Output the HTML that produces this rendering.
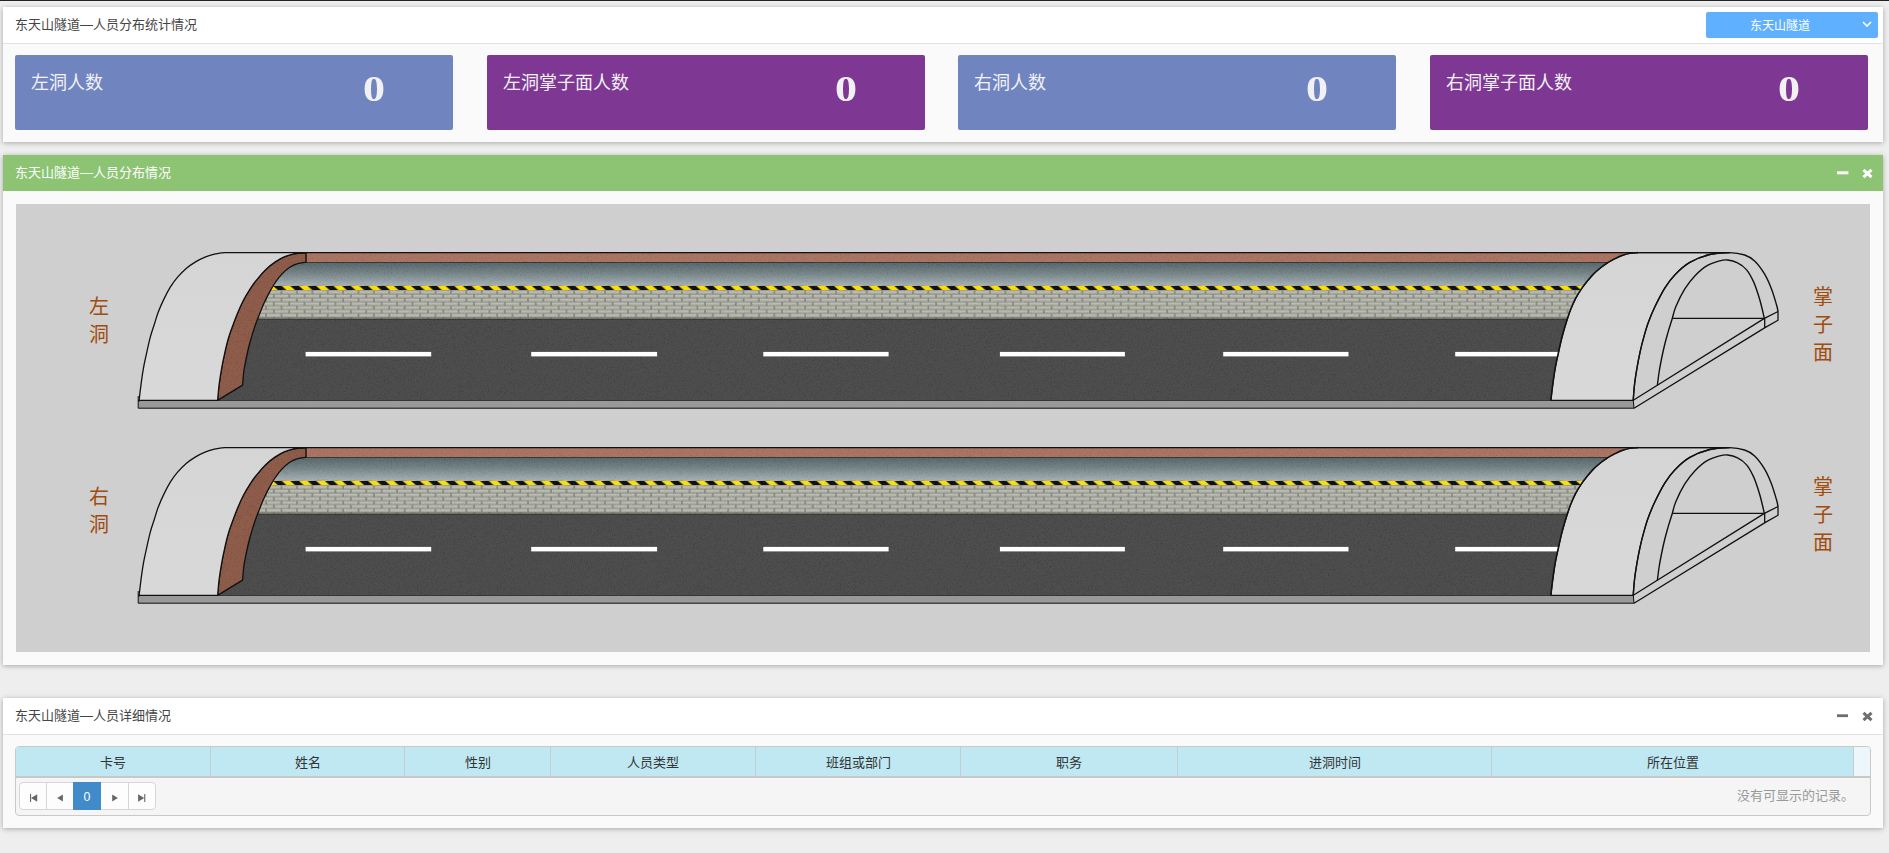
<!DOCTYPE html>
<html lang="zh-CN">
<head>
<meta charset="utf-8">
<title>东天山隧道—人员分布</title>
<style>
*{box-sizing:border-box}
html,body{margin:0;padding:0}
body{width:1889px;height:853px;overflow:hidden;background:#eeeeee;font-family:"Liberation Sans",sans-serif;font-size:13px;color:#333;position:relative}
.topline{position:absolute;left:0;top:0;width:1889px;height:1px;background:#222}
.panel{position:absolute;left:3px;width:1880px;background:#fafafa;box-shadow:0 1px 5px rgba(0,0,0,.3)}
.phead{position:absolute;left:0;top:0;width:100%;height:37px;background:#fff;border-bottom:1px solid #e2e2e2}
.phead .title{position:absolute;left:12px;top:0;line-height:36px;font-size:13px;color:#454545;white-space:nowrap}
.phead.green{background:#8cc474;border-bottom:none;height:36px}
.phead.green .title{color:#fff}
.tools{position:absolute;right:0;top:0;height:36px}
.tools span{position:absolute;display:block}
#p1{top:7px;height:135px}
#p2{top:155px;height:510px}
#p3{top:698px;height:130px}
.sel{position:absolute;left:1703px;top:5px;width:172px;height:26px;background:#5fb0ff;border-radius:2px;color:#fff;font-size:12px;line-height:26px}
.sel .t{position:absolute;left:44px;top:1px;white-space:nowrap}
.sel svg{position:absolute;left:156px;top:9px}
.card{position:absolute;top:48px;width:438px;height:75px;border-radius:2px;color:#fff}
.card.b{background:#7085c0}
.card.p{background:#7f3794}
.card .lab{position:absolute;left:16px;top:16px;font-family:"Liberation Serif",serif;font-size:18px;line-height:24px;color:#f1f1f6;white-space:nowrap}
.card .num{position:absolute;left:339px;top:14px;width:40px;text-align:center;font-family:"Liberation Serif",serif;font-weight:bold;font-size:35.5px;line-height:40px;top:14.3px;color:#f1f1f4;transform:scaleX(1.24)}
#tunnel{position:absolute;left:13px;top:49px;width:1854px;height:448px;background:#cfcfcf;overflow:hidden}
.vlab{position:absolute;font-family:"Liberation Serif",serif;color:#a04c0e;font-size:20px;line-height:28px;width:24px;text-align:center}
.grid{position:absolute;left:12px;top:48px;width:1856px;height:70px;border:1px solid #c9c9c9;border-radius:4px;background:#f5f5f5;overflow:hidden}
.ghead{position:absolute;left:0;top:0;width:1854px;height:31px;background:#edf6fa;border-bottom:2px solid #c8c8c8}
.ghead div{position:absolute;top:0;height:29px;background:#bfe8f2;border-right:1px solid #c4cdd0;text-align:center;line-height:31px;font-size:13px;color:#333}
.pager{position:absolute;left:3px;top:35px;height:28px;width:137px;border:1px solid #d6d6d6;border-radius:4px;background:#fdfdfd}
.pager span{position:absolute;top:0;height:26px;width:27px;border-right:1px solid #d6d6d6;text-align:center;line-height:27px;color:#555}
.pager span.cur{background:#428bca;color:#fff;font-size:12.4px;border-right:none;width:28px;top:-1px;height:28px;line-height:30px}
.pager svg{position:absolute;top:11px}
.norec{position:absolute;right:16px;top:34px;line-height:30px;color:#999;font-size:13px;white-space:nowrap}
</style>
</head>
<body>
<div class="topline"></div>

<div class="panel" id="p1">
  <div class="phead"><div class="title">东天山隧道—人员分布统计情况</div>
    <div class="sel"><span class="t">东天山隧道</span>
      <svg width="10" height="7" viewBox="0 0 10 7"><path d="M1 1 L5 5 L9 1" fill="none" stroke="#fff" stroke-width="1.6"/></svg>
    </div>
  </div>
  <div class="card b" style="left:12px"><div class="lab">左洞人数</div><div class="num">0</div></div>
  <div class="card p" style="left:484px"><div class="lab">左洞掌子面人数</div><div class="num">0</div></div>
  <div class="card b" style="left:955px"><div class="lab">右洞人数</div><div class="num">0</div></div>
  <div class="card p" style="left:1427px"><div class="lab">右洞掌子面人数</div><div class="num">0</div></div>
</div>

<div class="panel" id="p2">
  <div class="phead green"><div class="title">东天山隧道—人员分布情况</div>
    <svg class="ic" style="position:absolute;left:1833px;top:16px" width="13" height="4" viewBox="0 0 13 4"><rect x="1" y="0.3" width="11.4" height="3" fill="#fff"/></svg>
    <svg class="ic" style="position:absolute;left:1859px;top:13px" width="11" height="11" viewBox="0 0 11 11"><path d="M1.5 1.8 L9.5 9.2 M9.5 1.8 L1.5 9.2" stroke="#fff" stroke-width="3" fill="none"/></svg>
  </div>
  <div id="tunnel">
    <svg width="1854" height="448" viewBox="16 204 1854 448" style="position:absolute;left:0;top:0;display:block">
<defs>
<linearGradient id="gc" x1="0" y1="0" x2="0" y2="1"><stop offset="0" stop-color="#526266"/><stop offset="0.45" stop-color="#728185"/><stop offset="1" stop-color="#a6b1b4"/></linearGradient>
<linearGradient id="gs" x1="0" y1="0" x2="0" y2="1"><stop offset="0" stop-color="#d5d5d5"/><stop offset="1" stop-color="#d9d9d9"/></linearGradient>
<pattern id="hz" patternUnits="userSpaceOnUse" x="402.5" y="285.9" width="17.26" height="4.4"><rect width="17.26" height="4.4" fill="#0a0a0a"/><path d="M0 0h8.6l5 4.4h-8.6z" fill="#ffe000"/></pattern>
<pattern id="bk" patternUnits="userSpaceOnUse" x="404.7" y="290.2" width="15.4" height="7.7"><rect width="15.4" height="7.7" fill="#83847a"/><rect x="0.9" y="0.75" width="13.7" height="2.75" fill="#b5b6ac"/><rect x="0.9" y="0.75" width="13.7" height="0.9" fill="#bfc0b6"/><rect x="-6.8" y="4.6" width="13.7" height="2.75" fill="#b5b6ac"/><rect x="8.6" y="4.6" width="13.7" height="2.75" fill="#b5b6ac"/><rect x="-6.8" y="4.6" width="13.7" height="0.9" fill="#bfc0b6"/><rect x="8.6" y="4.6" width="13.7" height="0.9" fill="#bfc0b6"/></pattern>
<filter id="nz" x="0" y="0" width="100%" height="100%"><feTurbulence type="fractalNoise" baseFrequency="1.3" numOctaves="1" seed="3" result="t"/><feColorMatrix in="t" type="matrix" values="3 0 0 0 -1  3 0 0 0 -1  3 0 0 0 -1  0 0 0 0 0.045"/></filter>
<clipPath id="ci"><path d="M217.6 400.4 C217.9 397.6 218.5 389.2 219.2 383.8 C219.9 378.4 220.8 372.9 221.7 367.8 C222.6 362.7 223.6 358.0 224.7 353.1 C225.8 348.2 227.0 343.1 228.4 338.3 C229.8 333.5 231.6 328.8 233.2 324.5 C234.8 320.2 236.1 316.5 237.8 312.5 C239.5 308.5 241.4 304.2 243.4 300.3 C245.4 296.4 247.7 292.7 250.0 289.1 C252.3 285.5 254.8 282.0 257.5 278.8 C260.1 275.5 262.9 272.2 265.9 269.4 C268.9 266.6 272.2 264.0 275.3 261.9 C278.4 259.8 281.6 258.0 284.7 256.7 C287.8 255.4 290.6 254.6 294.1 253.9 C297.7 253.2 304.0 252.8 306.0 252.6 L1638.0 252.6 C1636.7 252.7 1632.6 252.8 1630.0 253.2 C1627.4 253.7 1625.0 254.4 1622.5 255.3 C1620.0 256.2 1617.5 257.4 1615.0 258.6 C1612.5 259.9 1609.8 261.3 1607.5 262.8 C1605.2 264.3 1603.2 265.6 1600.9 267.5 C1598.6 269.4 1595.7 271.8 1593.4 274.1 C1591.1 276.5 1588.9 279.1 1586.9 281.6 C1584.9 284.1 1583.1 286.3 1581.2 289.1 C1579.3 291.9 1577.3 295.1 1575.6 298.4 C1573.9 301.7 1572.4 305.1 1570.9 308.8 C1569.4 312.4 1568.3 315.9 1566.8 320.6 C1565.3 325.3 1563.4 331.7 1562.0 337.1 C1560.6 342.5 1559.4 348.0 1558.3 353.1 C1557.2 358.2 1556.1 362.7 1555.2 367.8 C1554.3 372.9 1553.5 378.4 1552.8 383.8 C1552.1 389.2 1551.1 397.6 1550.8 400.4 Z"/></clipPath>
<g id="tn">
<path d="M138.2 400.4H1633.3L1634 408.2H138.2Z" fill="#999999" stroke="#111" stroke-width="1"/>
<path d="M1550.8 400.4 C1551.1 397.6 1552.1 389.2 1552.8 383.8 C1553.5 378.4 1554.3 372.9 1555.2 367.8 C1556.1 362.7 1557.2 358.2 1558.3 353.1 C1559.4 348.0 1560.6 342.5 1562.0 337.1 C1563.4 331.7 1565.3 325.3 1566.8 320.6 C1568.3 315.9 1569.4 312.4 1570.9 308.8 C1572.4 305.1 1573.9 301.7 1575.6 298.4 C1577.3 295.1 1579.3 291.9 1581.2 289.1 C1583.1 286.3 1584.9 284.1 1586.9 281.6 C1588.9 279.1 1591.1 276.5 1593.4 274.1 C1595.7 271.8 1598.6 269.4 1600.9 267.5 C1603.2 265.6 1605.2 264.3 1607.5 262.8 C1609.8 261.3 1612.5 259.9 1615.0 258.6 C1617.5 257.4 1620.0 256.2 1622.5 255.3 C1625.0 254.4 1627.4 253.7 1630.0 253.2 C1632.6 252.8 1636.7 252.7 1638.0 252.6 L1729.6 252.6 C1726.3 252.9 1716.3 252.9 1709.7 254.5 C1703.1 256.1 1695.6 259.0 1689.8 262.4 C1684.0 265.8 1678.9 270.6 1674.8 274.9 C1670.7 279.1 1668.2 282.6 1664.9 287.9 C1661.6 293.2 1657.7 301.0 1654.9 306.8 C1652.1 312.6 1650.2 317.4 1648.3 322.5 C1646.4 327.6 1645.2 332.2 1643.8 337.1 C1642.4 342.0 1641.2 346.7 1640.1 351.8 C1639.0 356.9 1637.9 362.5 1637.0 367.8 C1636.1 373.1 1635.2 378.4 1634.6 383.8 C1634.0 389.2 1633.4 397.6 1633.2 400.4 Z" fill="url(#gs)" stroke="#111" stroke-width="1.3"/>
<g clip-path="url(#ci)">
<rect x="210" y="250" width="1440" height="12.3" fill="#a9705f"/>
<rect x="210" y="262.3" width="1440" height="23.7" fill="url(#gc)"/>
<rect x="210" y="262" width="1440" height="0.9" fill="#2c2c2c"/>
<rect x="210" y="285.9" width="1440" height="4.4" fill="url(#hz)"/>
<rect x="210" y="290.2" width="1440" height="28.8" fill="url(#bk)"/>
<rect x="210" y="317.4" width="1440" height="1.7" fill="#55564f" opacity="0.55"/>
<rect x="210" y="319" width="1440" height="83" fill="#474747"/>
<rect x="210" y="318.8" width="1440" height="1.1" fill="#333"/>
</g>
<path d="M217.6 400.4 C217.9 397.6 218.5 389.2 219.2 383.8 C219.9 378.4 220.8 372.9 221.7 367.8 C222.6 362.7 223.6 358.0 224.7 353.1 C225.8 348.2 227.0 343.1 228.4 338.3 C229.8 333.5 231.6 328.8 233.2 324.5 C234.8 320.2 236.1 316.5 237.8 312.5 C239.5 308.5 241.4 304.2 243.4 300.3 C245.4 296.4 247.7 292.7 250.0 289.1 C252.3 285.5 254.8 282.0 257.5 278.8 C260.1 275.5 262.9 272.2 265.9 269.4 C268.9 266.6 272.2 264.0 275.3 261.9 C278.4 259.8 281.6 258.0 284.7 256.7 C287.8 255.4 290.6 254.6 294.1 253.9 C297.7 253.2 304.0 252.8 306.0 252.6 L306.0 262.3 C304.5 262.5 299.7 262.9 296.9 263.8 C294.1 264.6 291.9 265.8 289.4 267.5 C286.9 269.2 284.2 271.6 281.9 274.1 C279.5 276.6 277.3 279.5 275.3 282.5 C273.3 285.5 271.6 288.5 269.7 291.9 C267.8 295.3 265.8 299.4 264.1 303.1 C262.4 306.9 260.6 311.3 259.4 314.4 C258.1 317.5 257.7 318.7 256.6 321.6 C255.5 324.6 254.2 328.3 253.0 332.1 C251.8 335.9 250.5 340.2 249.4 344.5 C248.3 348.8 247.2 353.5 246.3 358.0 C245.4 362.5 244.4 367.0 243.8 371.5 C243.2 376.0 242.8 382.8 242.6 385.1 Z" fill="#8a5744" stroke="none"/>
<g clip-path="url(#ci)">
<rect x="210" y="250" width="1440" height="152" filter="url(#nz)"/>
<rect x="305.6" y="351.9" width="125.6" height="4.5" fill="#fff"/>
<rect x="531.2" y="351.9" width="125.9" height="4.5" fill="#fff"/>
<rect x="763.3" y="351.9" width="125.3" height="4.5" fill="#fff"/>
<rect x="999.9" y="351.9" width="125.0" height="4.5" fill="#fff"/>
<rect x="1223.2" y="351.9" width="125.3" height="4.5" fill="#fff"/>
<rect x="1455.2" y="351.9" width="114.8" height="4.5" fill="#fff"/>
</g>
<path d="M223.7 252.6H1730" fill="none" stroke="#111" stroke-width="1.2"/>
<path d="M1550.8 400.4 C1551.1 397.6 1552.1 389.2 1552.8 383.8 C1553.5 378.4 1554.3 372.9 1555.2 367.8 C1556.1 362.7 1557.2 358.2 1558.3 353.1 C1559.4 348.0 1560.6 342.5 1562.0 337.1 C1563.4 331.7 1565.3 325.3 1566.8 320.6 C1568.3 315.9 1569.4 312.4 1570.9 308.8 C1572.4 305.1 1573.9 301.7 1575.6 298.4 C1577.3 295.1 1579.3 291.9 1581.2 289.1 C1583.1 286.3 1584.9 284.1 1586.9 281.6 C1588.9 279.1 1591.1 276.5 1593.4 274.1 C1595.7 271.8 1598.6 269.4 1600.9 267.5 C1603.2 265.6 1605.2 264.3 1607.5 262.8 C1609.8 261.3 1612.5 259.9 1615.0 258.6 C1617.5 257.4 1620.0 256.2 1622.5 255.3 C1625.0 254.4 1627.4 253.7 1630.0 253.2 C1632.6 252.8 1636.7 252.7 1638.0 252.6" fill="none" stroke="#111" stroke-width="1.6"/>
<path d="M217.6 400.4 C217.9 397.6 218.5 389.2 219.2 383.8 C219.9 378.4 220.8 372.9 221.7 367.8 C222.6 362.7 223.6 358.0 224.7 353.1 C225.8 348.2 227.0 343.1 228.4 338.3 C229.8 333.5 231.6 328.8 233.2 324.5 C234.8 320.2 236.1 316.5 237.8 312.5 C239.5 308.5 241.4 304.2 243.4 300.3 C245.4 296.4 247.7 292.7 250.0 289.1 C252.3 285.5 254.8 282.0 257.5 278.8 C260.1 275.5 262.9 272.2 265.9 269.4 C268.9 266.6 272.2 264.0 275.3 261.9 C278.4 259.8 281.6 258.0 284.7 256.7 C287.8 255.4 290.6 254.6 294.1 253.9 C297.7 253.2 304.0 252.8 306.0 252.6 L306.0 262.3 C304.5 262.5 299.7 262.9 296.9 263.8 C294.1 264.6 291.9 265.8 289.4 267.5 C286.9 269.2 284.2 271.6 281.9 274.1 C279.5 276.6 277.3 279.5 275.3 282.5 C273.3 285.5 271.6 288.5 269.7 291.9 C267.8 295.3 265.8 299.4 264.1 303.1 C262.4 306.9 260.6 311.3 259.4 314.4 C258.1 317.5 257.7 318.7 256.6 321.6 C255.5 324.6 254.2 328.3 253.0 332.1 C251.8 335.9 250.5 340.2 249.4 344.5 C248.3 348.8 247.2 353.5 246.3 358.0 C245.4 362.5 244.4 367.0 243.8 371.5 C243.2 376.0 242.8 382.8 242.6 385.1 Z" fill="none" stroke="#111" stroke-width="1.3" stroke-linejoin="round"/>
<path d="M306 252.6V262.3" stroke="#3a2018" stroke-width="1.2"/>
<path d="M139.0 400.4 C139.0 400.3 138.8 402.6 139.2 399.8 C139.5 397.0 140.4 389.1 141.1 383.8 C141.8 378.5 142.6 372.9 143.5 367.8 C144.4 362.7 145.5 358.2 146.6 353.1 C147.7 348.0 149.0 342.0 150.3 337.1 C151.6 332.2 153.3 327.6 154.6 323.5 C155.9 319.4 156.6 316.5 158.1 312.5 C159.6 308.5 161.7 303.6 163.8 299.4 C165.8 295.2 168.0 290.9 170.3 287.2 C172.6 283.4 175.1 280.0 177.8 276.9 C180.5 273.8 183.3 270.9 186.2 268.4 C189.2 265.9 192.5 263.8 195.6 261.9 C198.7 260.0 201.9 258.5 205.0 257.2 C208.1 255.9 211.3 255.0 214.4 254.2 C217.5 253.4 222.2 252.9 223.8 252.6 L306.0 252.6 C304.0 252.8 297.7 253.2 294.1 253.9 C290.6 254.6 287.8 255.4 284.7 256.7 C281.6 258.0 278.4 259.8 275.3 261.9 C272.2 264.0 268.9 266.6 265.9 269.4 C262.9 272.2 260.1 275.5 257.5 278.8 C254.8 282.0 252.3 285.5 250.0 289.1 C247.7 292.7 245.4 296.4 243.4 300.3 C241.4 304.2 239.5 308.5 237.8 312.5 C236.1 316.5 234.8 320.2 233.2 324.5 C231.6 328.8 229.8 333.5 228.4 338.3 C227.0 343.1 225.8 348.2 224.7 353.1 C223.6 358.0 222.6 362.7 221.7 367.8 C220.8 372.9 219.9 378.4 219.2 383.8 C218.5 389.2 217.9 397.6 217.6 400.4 Z" fill="url(#gs)" stroke="#111" stroke-width="1.3" stroke-linejoin="round"/>
<path d="M138.2 396V400.4" stroke="#111" stroke-width="1"/>
<path d="M1633.2 400.4 C1633.4 397.6 1634.0 389.2 1634.6 383.8 C1635.2 378.4 1636.1 373.1 1637.0 367.8 C1637.9 362.5 1639.0 356.9 1640.1 351.8 C1641.2 346.7 1642.4 342.0 1643.8 337.1 C1645.2 332.2 1646.4 327.6 1648.3 322.5 C1650.2 317.4 1652.1 312.6 1654.9 306.8 C1657.7 301.0 1661.6 293.2 1664.9 287.9 C1668.2 282.6 1670.7 279.1 1674.8 274.9 C1678.9 270.6 1684.0 265.8 1689.8 262.4 C1695.6 259.0 1703.1 256.1 1709.7 254.5 C1716.3 252.9 1723.8 252.5 1729.6 252.6 C1735.4 252.7 1740.4 253.6 1744.6 255.0 C1748.8 256.4 1751.3 257.8 1754.6 260.9 C1757.9 264.0 1761.7 269.2 1764.5 273.9 C1767.3 278.6 1769.5 283.8 1771.5 288.9 C1773.5 294.0 1775.4 301.0 1776.5 304.8 C1777.6 308.6 1777.8 310.4 1778.0 311.5" fill="none" stroke="#111" stroke-width="1.4"/>
<path d="M1657.4 385.1 C1657.7 382.8 1658.5 376.0 1659.2 371.5 C1659.9 367.0 1660.8 362.5 1661.7 358.0 C1662.6 353.5 1663.6 349.0 1664.7 344.5 C1665.8 340.0 1667.2 335.2 1668.4 330.9 C1669.7 326.6 1671.0 322.8 1672.2 318.8 C1673.4 314.8 1673.7 311.8 1675.8 306.8 C1677.9 301.8 1681.6 294.0 1684.8 288.9 C1688.0 283.8 1691.1 279.7 1694.8 275.9 C1698.5 272.1 1702.5 268.4 1706.7 265.9 C1710.9 263.4 1716.2 261.9 1719.7 260.9 C1723.2 259.9 1724.6 259.7 1727.6 260.0 C1730.6 260.3 1734.4 261.2 1737.6 262.9 C1740.8 264.5 1743.9 266.7 1746.6 269.9 C1749.3 273.1 1751.4 277.1 1753.6 281.9 C1755.8 286.7 1757.9 293.5 1759.5 298.8 C1761.1 304.1 1762.5 310.5 1763.3 313.8 C1764.1 317.1 1764.1 317.6 1764.3 318.4" fill="none" stroke="#111" stroke-width="1.4"/>
<path d="M1672 318.4H1764.3 M1633.3 400.2L1764.4 318.4L1778 311.5V320.2L1765 327.6L1634 408.2 M1764.7 318.4V327.6" fill="none" stroke="#111" stroke-width="1.3" stroke-linejoin="round"/>
</g>
</defs>
<use href="#tn"/>
<use href="#tn" y="195"/>
</svg>
<div class="vlab" style="left:70.7px;top:89.2px">左<br>洞</div>
<div class="vlab" style="left:70.7px;top:279.2px">右<br>洞</div>
<div class="vlab" style="left:1795.2px;top:79.1px">掌<br>子<br>面</div>
<div class="vlab" style="left:1795.2px;top:269.1px">掌<br>子<br>面</div>
  </div>
</div>

<div class="panel" id="p3">
  <div class="phead"><div class="title">东天山隧道—人员详细情况</div>
    <svg class="ic" style="position:absolute;left:1833px;top:16px" width="13" height="4" viewBox="0 0 13 4"><rect x="1" y="0.3" width="11" height="2.8" fill="#6e6e6e"/></svg>
    <svg class="ic" style="position:absolute;left:1859px;top:13px" width="11" height="11" viewBox="0 0 11 11"><path d="M1.5 1.8 L9.5 9.2 M9.5 1.8 L1.5 9.2" stroke="#6e6e6e" stroke-width="3" fill="none"/></svg>
  </div>
  <div class="grid">
    <div class="ghead">
      <div style="left:0px;width:195px">卡号</div>
      <div style="left:195px;width:194px">姓名</div>
      <div style="left:389px;width:146px">性别</div>
      <div style="left:535px;width:205px">人员类型</div>
      <div style="left:740px;width:205px">班组或部门</div>
      <div style="left:945px;width:217px">职务</div>
      <div style="left:1162px;width:314px">进洞时间</div>
      <div style="left:1476px;width:362px">所在位置</div>
    </div>
    <div class="pager">
      <span style="left:0;width:27px"><svg style="left:10px" width="8" height="8" viewBox="0 0 8 8"><path d="M0 0h1.1v8H0z M7.2 0.2v7.6L1.1 4z" fill="#666"/></svg></span>
      <span style="left:27px;width:27px"><svg style="left:10.2px" width="8" height="8" viewBox="0 0 8 8"><path d="M5.9 0.6v6.8L0.2 4z" fill="#666"/></svg></span>
      <span class="cur" style="left:53px">0</span>
      <span style="left:81px;width:28px"><svg style="left:10.8px" width="8" height="8" viewBox="0 0 8 8"><path d="M0.2 0.6v6.8L5.9 4z" fill="#666"/></svg></span>
      <span style="left:109px;width:26px;border-right:none"><svg style="left:8.8px" width="8" height="8" viewBox="0 0 8 8"><path d="M6.2 0h1.1v8H6.2z M0.1 0.2v7.6L6.2 4z" fill="#666"/></svg></span>
    </div>
    <div class="norec">没有可显示的记录。</div>
  </div>
</div>
</body>
</html>
